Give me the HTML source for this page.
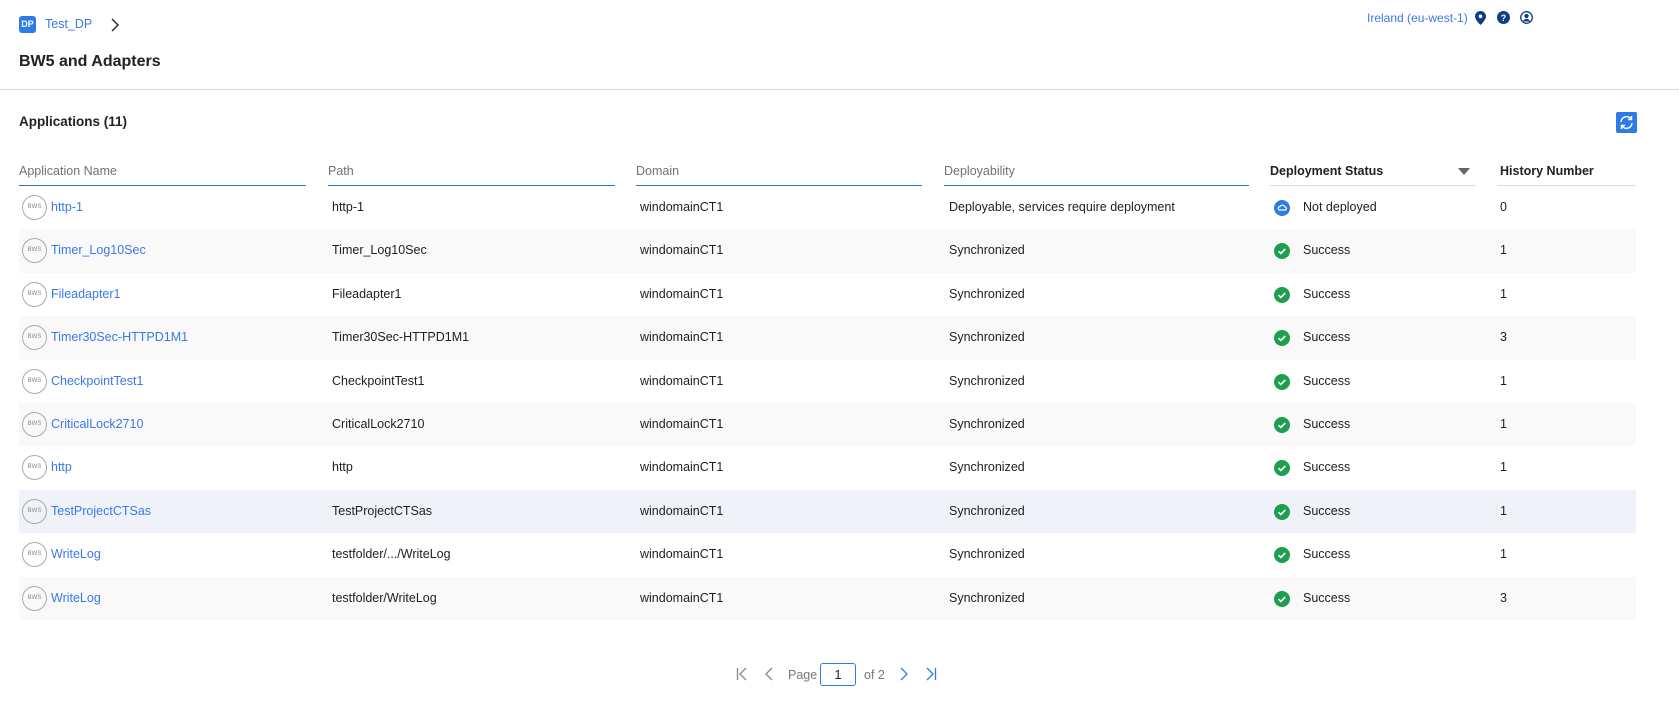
<!DOCTYPE html>
<html><head><meta charset="utf-8"><style>
*{box-sizing:border-box;margin:0;padding:0}
body{width:1679px;height:717px;background:#fff;font-family:"Liberation Sans",sans-serif;font-size:12.5px;color:#212121;position:relative;overflow:hidden}
.abs{position:absolute}
.link{color:#3b78e7}
.th{position:absolute;top:164px;height:22px;border-bottom:1px solid #1f7bc0;color:#727272;font-size:12.5px}
.th.b{color:#212121;font-weight:bold;border-bottom:1px solid #ddd}
.row{position:absolute;left:19px;width:1617px;height:43.4px}
.row>div{position:absolute;top:0;line-height:43.4px;white-space:nowrap}
.row>.ic{position:absolute;left:3px;top:9px;width:25px;height:25px;border:1px solid #aaa;border-radius:50%;font-size:6px;color:#888;text-align:center;line-height:22px}
</style></head><body>
<div class="abs" style="left:19px;top:16px;width:17px;height:17px;background:#2d7be5;border-radius:3px;color:#fff;font-size:9px;text-align:center;line-height:17px;font-weight:bold">DP</div>
<div class="abs link" style="left:45px;top:17px;font-size:12.5px">Test_DP</div>
<svg class="abs" style="left:111px;top:18px" width="8" height="14" viewBox="0 0 8 14"><path d="M1 1l6 6-6 6" fill="none" stroke="#222" stroke-width="1.4"/></svg>
<div class="abs" style="left:19px;top:53px;font-size:16px;font-weight:bold">BW5 and Adapters</div>
<div class="abs" style="left:0;top:89px;width:1679px;height:1px;background:#d6d6d6"></div>
<div class="abs link" style="left:1367px;top:11px;font-size:12px">Ireland (eu-west-1)</div>
<svg class="abs" style="left:1475px;top:11px" width="11" height="14" viewBox="0 0 11 14"><path d="M5.5 0C2.5 0 0 2.4 0 5.4 0 9 5.5 14 5.5 14S11 9 11 5.4C11 2.4 8.5 0 5.5 0z" fill="#0e3e88"/><circle cx="5.5" cy="5.3" r="1.8" fill="#fff"/></svg>
<svg class="abs" style="left:1497px;top:11px" width="13" height="13"><circle cx="6.5" cy="6.5" r="6.5" fill="#0e3e88"/><text x="6.5" y="10" font-size="9" font-weight="bold" fill="#fff" text-anchor="middle" font-family="Liberation Sans">?</text></svg>
<svg class="abs" style="left:1520px;top:11px" width="13" height="13" viewBox="0 0 13 13"><circle cx="6.5" cy="6.5" r="5.8" fill="none" stroke="#0e3e88" stroke-width="1.3"/><circle cx="6.5" cy="5" r="2.1" fill="#0e3e88"/><path d="M2.8 10.5c1-2 2.2-2.6 3.7-2.6s2.7.6 3.7 2.6" fill="#0e3e88"/></svg>
<div class="abs" style="left:19px;top:114px;font-size:13.5px;font-weight:bold">Applications (11)</div>
<div class="abs" style="left:1616px;top:112px;width:21px;height:21px;background:#2d7be5;border-radius:2px"><svg width="21" height="21" viewBox="0 0 21 21"><path d="M5 10a5.5 5.5 0 0 1 10-3M16 11a5.5 5.5 0 0 1-10 3" fill="none" stroke="#fff" stroke-width="1.5"/><path d="M15.5 4v3.5H12M5.5 17v-3.5H9" fill="none" stroke="#fff" stroke-width="1.5"/></svg></div>
<div class="th" style="left:19px;width:287px">Application Name</div>
<div class="th" style="left:328px;width:287px">Path</div>
<div class="th" style="left:636px;width:286px">Domain</div>
<div class="th" style="left:944px;width:305px">Deployability</div>
<div class="th b" style="left:1270px;width:206px">Deployment Status<svg style="position:absolute;right:6px;top:4px" width="12" height="7"><path d="M0 0h12L6 7z" fill="#666"/></svg></div>
<div class="th b" style="left:1497px;width:139px;padding-left:3px">History Number</div>
<div id="rows"></div>
<script>
var d=[["http-1","http-1","Deployable, services require deployment",0,"0"],["Timer_Log10Sec","Timer_Log10Sec","Synchronized",1,"1"],["Fileadapter1","Fileadapter1","Synchronized",1,"1"],["Timer30Sec-HTTPD1M1","Timer30Sec-HTTPD1M1","Synchronized",1,"3"],["CheckpointTest1","CheckpointTest1","Synchronized",1,"1"],["CriticalLock2710","CriticalLock2710","Synchronized",1,"1"],["http","http","Synchronized",1,"1"],["TestProjectCTSas","TestProjectCTSas","Synchronized",1,"1"],["WriteLog","testfolder/.../WriteLog","Synchronized",1,"1"],["WriteLog","testfolder/WriteLog","Synchronized",1,"3"]];
var h="";d.forEach(function(r,i){var bg=i==7?"#f0f2fa":(i%2?"#f9f9f9":"#fff");var top=186+i*43.4;
var st=r[3]?'<svg style="position:absolute;left:0;top:14px" width="16" height="16"><circle cx="8" cy="8" r="8" fill="#1e9e4f"/><path d="M4.5 8.2l2.3 2.3 4.5-4.5" fill="none" stroke="#fff" stroke-width="1.6"/></svg><span style="position:absolute;left:29px">Success</span>':'<svg style="position:absolute;left:0;top:14px" width="16" height="16"><circle cx="8" cy="8" r="8" fill="#2d7be5"/><path d="M4.5 9.5a2 2 0 0 1 1.5-3 2.8 2.8 0 0 1 5 .5 1.6 1.6 0 0 1 .5 3H5z" fill="none" stroke="#fff" stroke-width="1.2"/></svg><span style="position:absolute;left:29px">Not deployed</span>';
h+='<div class="row" style="top:'+top+'px;background:'+bg+'"><div class="ic">BWS</div><div class="link" style="left:32px">'+r[0]+'</div><div style="left:313px">'+r[1]+'</div><div style="left:621px">windomainCT1</div><div style="left:930px">'+r[2]+'</div><div style="left:1255px;width:200px;height:43px">'+st+'</div><div style="left:1481px">'+r[4]+'</div></div>';});
document.getElementById("rows").innerHTML=h;
</script>
<svg class="abs" style="left:736px;top:667px" width="12" height="14"><path d="M1.5 1v12M10 1L4 7l6 6" fill="none" stroke="#888" stroke-width="1.3"/></svg>
<svg class="abs" style="left:765px;top:667px" width="8" height="14"><path d="M7 1L1 7l6 6" fill="none" stroke="#888" stroke-width="1.3"/></svg>
<div class="abs" style="left:788px;top:668px;color:#777;font-size:12.5px">Page</div>
<div class="abs" style="left:820px;top:663px;width:36px;height:23px;border:1px solid #2d7be5;border-radius:3px;text-align:center;line-height:21px;font-size:13px">1</div>
<div class="abs" style="left:864px;top:668px;color:#777;font-size:12.5px">of 2</div>
<svg class="abs" style="left:900px;top:667px" width="8" height="14"><path d="M1 1l6 6-6 6" fill="none" stroke="#2d7be5" stroke-width="1.3"/></svg>
<svg class="abs" style="left:925px;top:667px" width="12" height="14"><path d="M10.5 1v12M2 1l6 6-6 6" fill="none" stroke="#2d7be5" stroke-width="1.3"/></svg>
</body></html>
